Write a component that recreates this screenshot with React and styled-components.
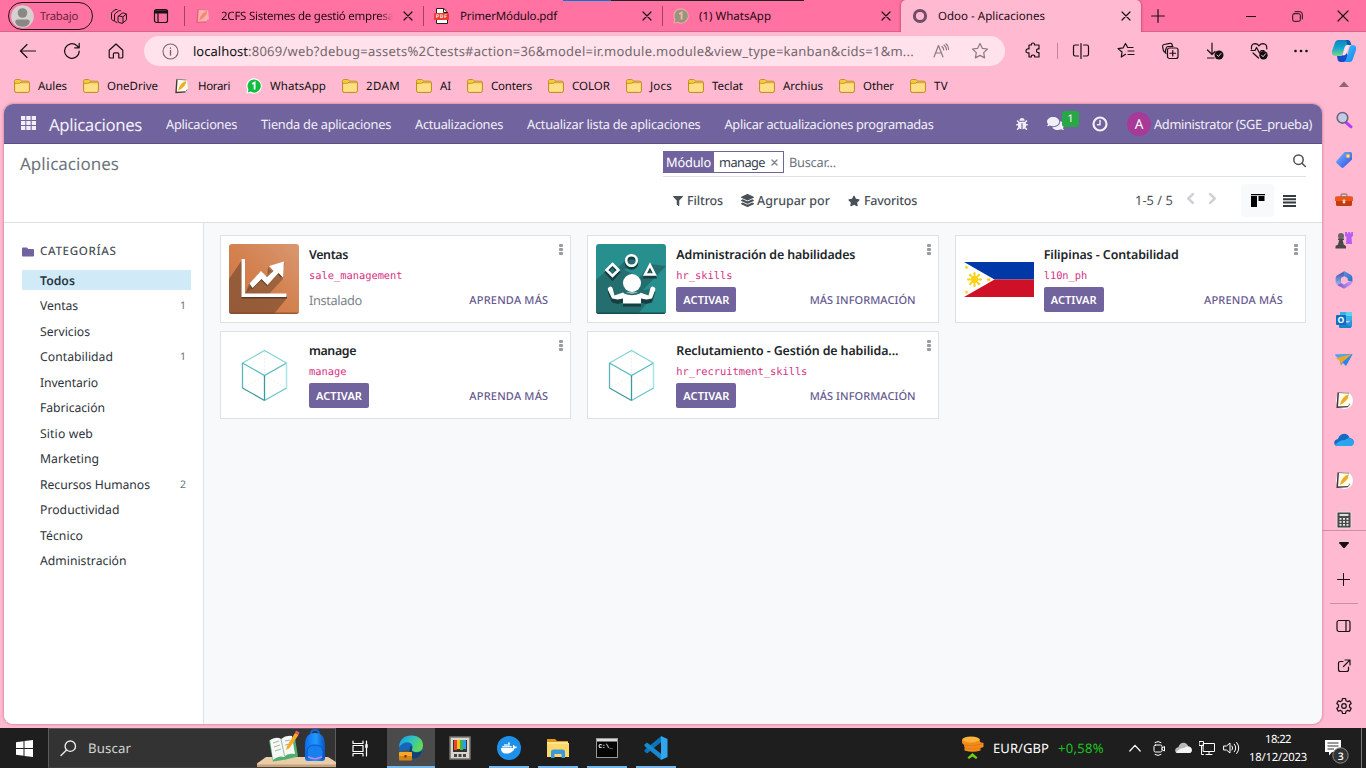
import React, { useLayoutEffect, useRef, useState } from 'react';
import styled, { createGlobalStyle } from 'styled-components';
import { FaBug, FaComments, FaFilter, FaLayerGroup, FaStar, FaFolder, FaDocker } from 'react-icons/fa';

const ui = '"Noto Sans", "Open Sans", sans-serif';

const GlobalStyle = createGlobalStyle`
  *, *::before, *::after { box-sizing: border-box; }
  html, body { margin: 0; padding: 0; overflow: hidden; }
  body { font-family: ${ui}; font-size: 12px; color: #111; text-rendering: geometricPrecision; }
  svg { display: block; flex: none; }
`;

/* A one-line label whose tracking is tuned so that it takes exactly `w` pixels. */
function Fit({ w, className, children }) {
  const ref = useRef(null);
  const [tracking, setTracking] = useState(0);
  useLayoutEffect(() => {
    const natural = ref.current.getBoundingClientRect().width;
    setTracking((w - natural) / String(children).length);
  }, [w, children]);
  return (
    <span className={className}>
      <span ref={ref} style={{ letterSpacing: tracking ? `${tracking}px` : undefined }}>{children}</span>
    </span>
  );
}

const Label = styled(Fit)`
  display: block;
  flex: none;
  width: ${(p) => p.w}px;
  white-space: nowrap;
`;

/* ---------- window frame ---------- */
const Screen = styled.div`
  width: 1366px;
  height: 768px;
  display: flex;
  flex-direction: column;
  background: #ffb9d0;
  overflow: hidden;
  position: relative;
`;
const TopStrip = styled.div`
  position: absolute;
  top: 0;
  left: 563px;
  width: 241px;
  height: 1px;
  background: linear-gradient(90deg, #0078d7 0 48px, #222 48px);
`;
const TabStrip = styled.div`
  height: 32px;
  flex: none;
  display: flex;
  align-items: stretch;
  background: #ff72a1;
  box-shadow: inset 0 -1px 0 #d7648b;
`;
const Profile = styled.div`
  width: 85px;
  height: 28px;
  margin: 2px 0 0 8px;
  border: 1px solid #22111a;
  border-radius: 14px;
  display: flex;
  align-items: center;
  gap: 6px;
  padding-left: 2px;
  color: #6e1f3d;
  font-size: 11.3px;
`;
const StripIcons = styled.div`
  display: flex;
  padding: 0 2px 0 5px;
`;
const StripIcon = styled.div`
  width: 42px;
  display: grid;
  place-items: center;
`;
const Tab = styled.div`
  width: ${(p) => (p.$active ? 240 : 239)}px;
  flex: none;
  display: flex;
  align-items: center;
  gap: 10px;
  padding: 0 10px 0 11px;
  font-size: 11.5px;
  position: relative;
  color: #1d0a12;
  background: ${(p) => (p.$active ? '#ffb9d0' : 'transparent')};
  border-radius: ${(p) => (p.$active ? '5px 5px 0 0' : 0)};
  box-shadow: ${(p) => (p.$active ? '0 0 3px #a8305a' : 'none')};
  clip-path: ${(p) => (p.$active ? 'inset(0 -4px 0 -4px)' : 'none')};
  &::before {
    content: '';
    position: absolute;
    left: 0;
    top: 6px;
    width: 1px;
    height: 20px;
    background: ${(p) => (p.$active ? 'transparent' : '#a24364')};
  }
`;
const TabTitle = styled.div`
  flex: 1;
  min-width: 0;
  ${(p) => p.$fade && 'mask-image: linear-gradient(90deg, #000 92%, transparent);'}
`;
const TabFiller = styled.div`
  flex: 1;
  display: flex;
  align-items: center;
  padding-left: 10px;
`;
const WindowButton = styled.div`
  width: 46px;
  display: grid;
  place-items: center;
`;

const Toolbar = styled.div`
  height: 40px;
  flex: none;
  display: flex;
  align-items: center;
  padding: 0 0 2px 6px;
`;
const ToolButton = styled.div`
  width: ${(p) => p.$w || 44}px;
  flex: none;
  display: grid;
  place-items: center;
  padding-left: ${(p) => p.$shift || 0}px;
`;
const Address = styled.div`
  width: 861px;
  height: 30px;
  flex: none;
  margin-left: 6px;
  border-radius: 15px;
  background: #ffe2eb;
  display: flex;
  align-items: center;
  padding-left: 18px;
  font-size: 13px;
  color: #74676c;
`;
const Host = styled(Label)`color: #111; margin-left: 14px;`;
const ToolRule = styled.div`
  width: 1px;
  height: 16px;
  background: #c4869a;
`;
const Bookmarks = styled.div`
  height: 32px;
  flex: none;
  display: flex;
  align-items: center;
  gap: 16px;
  padding: 0 14px 4px;
  font-size: 11.5px;
`;
const Bookmark = styled.div`
  display: flex;
  align-items: center;
  gap: 8px;
`;
const BookmarkRow = styled.div`
  display: flex;
  justify-content: space-between;
  flex: none;
  height: 32px;
`;
const ScrollUp = styled.div`
  width: 44px;
  display: grid;
  place-items: center;
  padding-bottom: 8px;
`;

const Middle = styled.div`
  display: flex;
  height: 624px;
  flex: none;
`;
const Page = styled.div`
  width: 1318px;
  height: 620px;
  margin-left: 4px;
  border-radius: 9px;
  overflow: hidden;
  background: #f8f9fa;
  box-shadow: 0 0 3px rgba(110, 30, 60, 0.5);
  display: flex;
  flex-direction: column;
`;

/* ---------- application ---------- */
const NavBar = styled.header`
  height: 40px;
  flex: none;
  display: flex;
  align-items: center;
  background: #71639e;
  border-bottom: 1px solid #5a4f7f;
  padding: 0 10px 0 17px;
  color: #f1eff6;
  font-size: 12.8px;
`;
const AppsGrid = styled.div`padding-bottom: 2px;`;
const Brand = styled(Label)`
  font-size: 16.8px;
  margin: 0 24px 0 13px;
  line-height: 38px;
  padding-top: 2px;
`;
const Menu = styled.nav`
  display: flex;
  gap: 24px;
  flex: 1;
  padding-top: 1px;
`;
const ChatIcon = styled.div`
  position: relative;
  margin: 0 28px 0 19px;
`;
const Badge = styled.span`
  position: absolute;
  left: 15px;
  top: -4px;
  width: 17px;
  height: 16px;
  border-radius: 3px;
  background: #28a745;
  color: #fff;
  font-size: 10.5px;
  line-height: 16px;
  text-align: center;
`;
const Avatar = styled.div`
  width: 24px;
  height: 24px;
  border-radius: 50%;
  background: #a73a98;
  color: #fff;
  font-size: 13.5px;
  line-height: 24px;
  text-align: center;
  margin: 0 3px 0 19px;
`;

const ControlPanel = styled.section`
  height: 79px;
  flex: none;
  display: flex;
  justify-content: space-between;
  background: #fff;
  border-bottom: 1px solid #dee2e6;
  padding: 0 16px;
`;
const Crumb = styled(Label)`
  font-size: 17px;
  color: #6c757d;
  line-height: 40px;
`;
const SearchArea = styled.div`width: 643px;`;
const SearchRow = styled.div`
  height: 33px;
  display: flex;
  align-items: center;
  border-bottom: 1px solid #dee2e6;
  font-size: 12.8px;
  padding-top: 4px;
`;
const Facet = styled.div`
  width: 121px;
  height: 22px;
  flex: none;
  border: 1px solid #71639e;
  display: flex;
  align-items: center;
  margin-right: 5px;
  color: #374151;
`;
const FacetName = styled.div`
  background: #71639e;
  color: #fff;
  width: 50px;
  height: 20px;
  line-height: 20px;
  padding-left: 2px;
  margin-right: 5px;
`;
const FacetClose = styled.div`margin-left: 6px;`;
const Placeholder = styled(Label)`color: #6c757d; flex: 1;`;
const SearchIcon = styled.div`padding-bottom: 3px;`;
const OptionsRow = styled.div`
  height: 45px;
  display: flex;
  align-items: center;
  padding: 2px 0 0 10px;
  color: #495057;
`;
const SearchOption = styled.div`
  display: flex;
  align-items: center;
  gap: ${(p) => p.$gap}px;
  margin-right: 18px;
  font-size: 12.5px;
  font-weight: 500;
`;
const Pager = styled.div`
  margin-left: auto;
  display: flex;
  align-items: center;
  gap: 13px;
  font-size: 12.8px;
  color: #495057;
  padding: 0 1px 2px 0;
`;
const PagerArrow = styled.div`padding-bottom: 3px;`;
const ViewButton = styled.div`
  width: 33px;
  height: 33px;
  margin-left: ${(p) => (p.$active ? 23 : -1)}px;
  border-radius: 3px;
  background: ${(p) => (p.$active ? '#f8f9fa' : 'none')};
  display: grid;
  place-items: center;
`;

const Content = styled.div`
  flex: 1;
  display: flex;
`;
const Categories = styled.aside`
  width: 200px;
  flex: none;
  background: #fff;
  border-right: 1px solid #dee2e6;
  padding: 19px 12px 0 18px;
`;
const CategoryHead = styled.div`
  display: flex;
  align-items: center;
  gap: 6px;
  height: 19px;
  margin-bottom: 9px;
  color: #495057;
  font-size: 11.6px;
  font-weight: 500;
`;
const Category = styled.div`
  height: 20px;
  margin-bottom: 5.5px;
  padding: 0 5px 0 18px;
  display: flex;
  align-items: center;
  justify-content: space-between;
  font-size: 12.2px;
  font-weight: ${(p) => (p.$active ? 600 : 400)};
  color: ${(p) => (p.$active ? '#2a3440' : '#2e343b')};
  background: ${(p) => (p.$active ? '#d1eaf8' : 'none')};
`;
const Count = styled.span`
  font-size: 10.5px;
  color: #6c757d;
  padding-top: 1px;
`;
const Kanban = styled.main`
  flex: 1;
  display: grid;
  grid-template-columns: repeat(3, 1fr);
  grid-auto-rows: 88px;
  gap: 8px 16px;
  padding: 12px 16px;
`;
const Card = styled.article`
  background: #fff;
  border: 1px solid #dee2e6;
  display: flex;
  padding: 8px 7px 0 8px;
  min-width: 0;
`;
const CardImage = styled.div`
  width: 70px;
  height: 70px;
  flex: none;
  display: grid;
  place-items: center;
  margin-right: 10px;
`;
const CardBody = styled.div`
  flex: 1;
  min-width: 0;
  display: flex;
  flex-direction: column;
`;
const Title = styled(Label)`
  font-size: 12.4px;
  font-weight: 600;
  line-height: 20px;
  height: 21px;
  padding-top: 1px;
  color: #212529;
`;
const Tech = styled(Label)`
  font-family: "DejaVu Sans Mono", monospace;
  font-size: 10.4px;
  line-height: 20px;
  height: 22px;
  color: #d63384;
  padding-top: 1px;
`;
const CardFoot = styled.div`
  height: 25px;
  display: flex;
  align-items: center;
  justify-content: space-between;
  padding-right: 11px;
`;
const Activate = styled.button`
  width: 60px;
  height: 25px;
  border: 0;
  border-radius: 2px;
  padding: 0 0 0 7px;
  background: #71639e;
  color: #fff;
  font: 600 11px/25px ${ui};
  text-align: left;
`;
const Installed = styled(Label)`
  color: #7c848b;
  font-size: 12.8px;
  padding-top: 1px;
`;
const MoreLink = styled(Label)`
  color: #66598f;
  font-size: 11px;
  font-weight: 500;
  padding-top: 1px;
`;

/* ---------- browser side rail ---------- */
const Rail = styled.aside`
  width: 44px;
  height: 624px;
  display: flex;
  flex-direction: column;
  align-items: center;
`;
const RailApps = styled.div`
  width: 44px;
  height: 427px;
  overflow: hidden;
  border-bottom: 1px solid #c790a3;
`;
const RailItem = styled.div`
  height: ${(p) => p.$h || 40}px;
  width: 44px;
  flex: none;
  display: grid;
  place-items: center;
  padding-right: 1px;
`;
const FirstRailItem = styled(RailItem)`
  height: 36px;
  padding-bottom: 5px;
`;
const RailRule = styled.div`
  width: 28px;
  height: 1px;
  background: #c790a3;
  margin: 3px 0 2px;
`;

/* ---------- desktop task bar ---------- */
const TaskBar = styled.footer`
  height: 40px;
  flex: none;
  display: flex;
  background: #1f1e1e;
  color: #fff;
`;
const TaskCell = styled.div`
  width: ${(p) => p.$w || 48}px;
  flex: none;
  display: grid;
  place-items: center;
`;
const TaskSearch = styled.div`
  width: 288px;
  border: 1px solid #5b5b5b;
  border-bottom-color: #3f3f3f;
  background: #333;
  display: flex;
  align-items: center;
  padding-left: 11px;
  gap: 11px;
  font-size: 13.2px;
  color: #d4d4d4;
`;
const SearchArt = styled.div`margin: 0 -1px 0 auto;`;
const TaskApp = styled.div`
  width: ${(p) => (p.$active ? 48 : 40)}px;
  margin: ${(p) => (p.$active ? '0 5px 0 3px' : '0 9px 0 0')};
  display: grid;
  place-items: center;
  background: ${(p) => (p.$active ? '#4b4b4b' : 'none')};
  box-shadow: ${(p) => (p.$open ? 'inset 0 -2px 0 #76b9ed' : 'none')};
`;
const Tray = styled.div`
  margin-left: auto;
  display: flex;
  align-items: center;
`;
const TrayIcon = styled.div`
  width: 24px;
  display: grid;
  place-items: center;
`;
const Rate = styled(Label)`font-size: 13px; margin: 0 9px;`;
const Change = styled(Label)`font-size: 13px; color: #19c61f; margin-right: 19px;`;
const Clock = styled.div`
  width: 70px;
  display: flex;
  flex-direction: column;
  align-items: center;
  font-size: 11.3px;
  line-height: 18px;
  padding-top: 1px;
`;
const Notice = styled.div`
  width: 49px;
  height: 40px;
  display: flex;
  padding: 11px 0 0 12px;
  border-right: 1px solid #777;
  margin-right: 4px;
`;
const NoticeText = styled.text`
  font: 600 10.5px "Open Sans", sans-serif;
  fill: #fff;
`;

/* ---------- drawings ---------- */
const Line = ({ s = 20, w = s, h = s, vb = `0 0 ${w} ${h}`, sw = 1.2, c = '#1a1015', children }) => (
  <svg width={w} height={h} viewBox={vb} fill="none" stroke={c} strokeWidth={sw} strokeLinecap="round" strokeLinejoin="round">{children}</svg>
);
const Close = ({ s = 10, c, sw }) => <Line s={s} c={c} sw={sw}><path d={`M1 1l${s - 2} ${s - 2}M${s - 1} 1L1 ${s - 1}`} /></Line>;

const Folder = () => (
  <svg width="16" height="16" viewBox="0 0 16 16">
    <path d="M.6 3.2Q.6 1.6 2.2 1.6h3.2q.8 0 1.3.6l1 1h6.1q1.6 0 1.6 1.6v8q0 1.6-1.6 1.6H2.2Q.6 14.4.6 12.8z" fill="#ffdf86" stroke="#b88a18" />
    <path d="M1.1 4.6V3.3q0-1.2 1.2-1.2h3q.6 0 1 .5l.9 1-1.5 1.2q-.4.3-1 .3H1.1z" fill="#f8ca31" />
    <path d="M1 5.2h3.8q.7 0 1.2-.4l1.8-1.4h6.5q1 .2 1 1.8" fill="#d9a93f" />
    <path d="M.6 5.4h4.2q.7 0 1.2-.4L7.7 3.3" fill="none" stroke="#b88a18" strokeWidth=".8" />
  </svg>
);
const Moodle = ({ faded, s = 16, halo }) => (
  <svg width={s} height={s} viewBox="0 0 16 16" opacity={faded ? 0.6 : 1}>
    {halo && <circle cx="8.5" cy="8.5" r="7.5" fill="#fff" />}
    <path d="M3.5 1.5l9.5.5 1 9-2 3-9 .6z" fill={faded ? '#ffd9c4' : '#fffdf0'} />
    <path d="M2.9 1.2L2 14.5l9.5-.6" fill="none" stroke={faded ? '#c9605f' : '#3b3a35'} strokeWidth="1.3" />
    <path d="M3 1.300l9.500.7M11.500 13.900l1.800-2.600" fill="none" stroke={faded ? '#d47873' : '#8c8a80'} />
    <path d="M12.300 2.800Q12 9 4.200 12.500 5.500 5 12.300 2.800z" fill={faded ? '#fb9548' : '#efae25'} />
  </svg>
);
const Whats = ({ faded }) => (
  <svg width="16" height="16" viewBox="0 0 16 16">
    <path d="M8 .3a7.7 7.7 0 1 1-3.700 14.4L.3 15.800l1-4A7.700 7.700 0 0 1 8 .3z" fill={faded ? '#e7a9ac' : '#fff'} />
    <path d="M8.200 1.400a6.600 6.600 0 1 1-3.500 12.200l-3 .8.8-3A6.600 6.600 0 0 1 8.200 1.400z" fill={faded ? '#9a9478' : '#10bd3f'} />
    <path d="M6.200 6L8.600 4.500V11.400" stroke={faded ? '#eab8bc' : '#fff'} strokeWidth="1.800" fill="none" />
  </svg>
);
const PdfText = styled.text`
  font: 700 5px Roboto, sans-serif;
  fill: #fff;
`;
const Pdf = () => (
  <svg width="16" height="16" viewBox="0 0 16 16">
    <path d="M2.500 .5h7.300l3.700 3.700v11.300h-11z" fill="#fff" stroke="#222" />
    <path d="M9.500 .5v4h4" fill="none" stroke="#222" />
    <rect x="0" y="5" width="15" height="7" rx="1" fill="#ee3b2f" />
    <PdfText x="2" y="10.400" textLength="11">PDF</PdfText>
  </svg>
);
const Person = () => (
  <svg width="23" height="23" viewBox="0 0 23 23">
    <circle cx="11.500" cy="11.500" r="11.300" fill="#d4d1ce" />
    <circle cx="11.500" cy="8" r="4.800" fill="#8a8886" />
    <path d="M4.200 17q0-2.500 2.500-2.500h9.600q2.500 0 2.500 2.500-1 4.700-7.300 4.700T4.200 17z" fill="#8a8886" />
  </svg>
);
const Odoo = () => <svg width="16" height="16"><circle cx="8" cy="8" r="5.600" fill="none" stroke="#714b67" strokeWidth="3" /></svg>;
const Copilot = () => (
  <svg width="26" height="24" viewBox="0 0 26 24">
    <defs>
      <linearGradient id="cpA" x1="0" y1="0" x2="0" y2="1"><stop stopColor="#0a83c8" /><stop offset=".5" stopColor="#16a8c8" /><stop offset="1" stopColor="#7cd58b" /></linearGradient>
      <linearGradient id="cpB" x1="0" y1="0" x2="1" y2="1"><stop stopColor="#3fc3ff" /><stop offset="1" stopColor="#1583ec" /></linearGradient>
    </defs>
    <path d="M6 17h3.500q2.200 0 2.800-2l1.200-4 5.500 9-2 3H9.500q-2 0-2.800-2z" fill="#174bc9" />
    <path d="M7 1h9.500q2 0 2.800 2l1 3h-3.800q-2.200 0-2.800 2l-2 7q-.8 2-3 2H5Q0 17 1 12L4 3.500Q5 1 7 1z" fill="url(#cpA)" />
    <path d="M15 1h1.500q2 0 2.800 2l1 3h-3.800z" fill="#0b5aa8" />
    <path d="M19 23h-6.500q2-.5 2.800-3l3.200-11.500Q19.200 6 21 6q5 0 4 5l-3 8.500Q21 23 19 23z" fill="url(#cpB)" />
    <path d="M11.500 16l2.500-8q.7-2 2.700-2h1.800l-3.300 8.500q-.8 2-2.700 2z" fill="#ffe2eb" />
  </svg>
);
const Dots3 = () => (
  <svg width="4" height="12" viewBox="0 0 4 12" fill="#979ca1"><rect y="0" width="4" height="3" rx="1" /><rect y="4" width="4" height="3" rx="1" /><rect y="8" width="4" height="3" rx="1" /></svg>
);

const SalesArt = () => (
  <svg width="70" height="70" viewBox="0 0 70 70">
    <defs>
      <linearGradient id="sale" x1="0" y1="1" x2="1" y2="0"><stop stopColor="#cd7645" /><stop offset=".5" stopColor="#d3814f" /><stop offset="1" stopColor="#d99871" /></linearGradient>
      <clipPath id="saleClip"><rect width="70" height="70" rx="3" /></clipPath>
    </defs>
    <g clipPath="url(#saleClip)">
      <rect width="70" height="70" fill="url(#sale)" />
      <path d="M13 16L0 35V70H45L58 54H16V50L28 40 38 34 39 23H47L39 23l4 4-8 7-4-5-11 14-4 8z" fill="#73492f" opacity=".62" />
      <path d="M16 50h24L54 35V19L39.500 22l4 5-7 6-5-5L20 40z" fill="#73492f" opacity=".55" />
      <path d="M0 68.500h70V70H0z" fill="#7e4727" opacity=".7" />
      <path d="M12.500 17h3.500v34.500h42v3H12.500z" fill="#5d3a26" />
      <path d="M21 41l11-12 6 6 9-8-5-4 13.500-4L52 34l-3-4-11 12-6-6-9 9.500z" fill="#5d3a26" />
      <path d="M12.500 15h3.500v34.500h41.500V53H12.500z" fill="#fff" />
      <path d="M20.500 39.500L32 27l6 6 6.500-6-4.500-5 15-4.500-1 16-4.500-4.500L38.500 41l-6-6-9 9z" fill="#fff" />
    </g>
  </svg>
);
const SkillsArt = () => (
  <svg width="70" height="70" viewBox="0 0 70 70">
    <defs><clipPath id="skClip"><rect width="70" height="70" rx="3" /></clipPath></defs>
    <g clipPath="url(#skClip)">
      <rect width="70" height="70" fill="#27908f" />
      <path d="M10 27L0 36V70H42L60 48 55 45 47 46 70 22 54 20 44 33 28 26 40 20 34 11 22 24z" fill="#255f63" opacity=".7" />
      <path d="M0 68.500h70V70H0z" fill="#174c50" />
      <g fill="none" stroke="#163f43" strokeWidth="3" transform="translate(0 2)"><circle cx="35.500" cy="17" r="5.300" /><path d="M16.500 20l6 6.500-6 6.500-6-6.500zM54 20.500l4.800 10.500H49z" /></g>
      <g fill="none" stroke="#fff" strokeWidth="2.500"><circle cx="35.500" cy="16.500" r="5.300" /><path d="M16.500 20l6 6-6 6-6-6zM54 21l4.800 9.500H49z" /></g>
      <path transform="translate(0 2.500)" fill="#163f43" d="M12.500 43.500q3-1.500 4 1l2 7 8-2h17.500l8 2 2-7q1-2.500 4-1 1.500 1 1 3L56 56l-6 1.500-5-1.500v4H27v-4l-5 1.500-6-1.500-4-9.500q-.5-2 .5-3z" />
      <path d="M13 43q2.500-1.500 3.500 1l2 7.500 8.500-3h17l8.500 3 2-7.500q1-2.500 3.500-1 2 1 1.200 3L56 54.500l-5.500 1-5.500-1V59.500H27v-5l-5.500 1-5.500-1L12 46q-.8-2 1-3z" fill="#fff" />
      <path d="M26 46q10 7 20 0l-2 3.500q-8 3.500-16 0z" fill="#27696c" />
      <circle cx="36" cy="39" r="9" fill="#fff" />
    </g>
  </svg>
);
const CubeArt = () => (
  <svg width="70" height="70" viewBox="0 0 70 70" fill="none">
    <path d="M35.500 11v25L13.500 48M35.500 36l22 12" stroke="#e2eeee" strokeWidth=".8" strokeDasharray="2 1.500" />
    <path d="M13.500 23l22-12.500 22 12.500" stroke="#84d4d6" strokeWidth="1.200" />
    <path d="M13.500 23v25" stroke="#5eb5b8" strokeWidth="1.300" />
    <path d="M13.500 48l22 12.500" stroke="#3a989b" strokeWidth="1.200" />
    <path d="M35.500 60.500l22-12.500" stroke="#69c3c5" strokeWidth="1.200" />
    <path d="M13.500 23l22 12.500L57.500 23" stroke="#58b9bc" strokeWidth="1.200" />
    <path d="M35.500 35.500v25" stroke="#3a9a9d" strokeWidth="1.300" />
    <path d="M57.500 23v25" stroke="#a5e6e6" strokeWidth="1.500" />
  </svg>
);
const rays = [0, 45, 90, 135, 180, 225, 270, 315];
const FlagArt = () => (
  <svg width="70" height="35" viewBox="0 0 70 35">
    <path d="M0 0h70v17.500H0z" fill="#0038a8" /><path d="M0 17.500h70V35H0z" fill="#ce1126" /><path d="M0 0l30.500 17.500L0 35z" fill="#fff" />
    <g fill="#fcd116"><circle cx="10.500" cy="17.500" r="3.700" />{rays.map((r) => <path key={r} d="M9.700 14l-.4-3.300 1.200-.7 1.200.7-.4 3.300z" transform={`rotate(${r} 10.500 17.500)`} />)}
      <path d="M2.500 3.300l.6 1.300 1.400.1-1 1 .2 1.400-1.200-.6-1.200.6.2-1.400-1-1 1.400-.1zM2.500 28l.6 1.300 1.400.1-1 1 .2 1.400-1.200-.6-1.200.6.2-1.400-1-1 1.400-.1zM23.500 15.500l1.200 1 1.800-.4-.6 1.500.6 1.500-1.800-.4-1.200 1v-1.600l-1.200-.5 1.200-.5z" />
    </g>
  </svg>
);

const Magnifier = () => (
  <svg width="18" height="18" viewBox="0 0 18 18"><path d="M10.500 11l5.500 4.800" stroke="#b63df0" strokeWidth="3" strokeLinecap="round" /><circle cx="7.500" cy="6.800" r="5.300" fill="#c5c9e8" stroke="#696478" strokeWidth="1.600" /></svg>
);
const Tag = () => (
  <svg width="18" height="18" viewBox="0 0 18 18"><defs><linearGradient id="tag" x1="0" y1="0" x2="1" y2="1"><stop stopColor="#74bcff" /><stop offset="1" stopColor="#3048e6" /></linearGradient></defs><path d="M9.500 1h6q1.500 0 1.500 1.500v6L8.500 16.500q-1 .8-2 0L1.500 12q-.8-1 0-2z" fill="url(#tag)" /><circle cx="13" cy="5" r="1.800" fill="#e7e7c5" stroke="#ecb92c" /></svg>
);
const ToolCase = () => (
  <svg width="18" height="16" viewBox="0 0 18 16"><path d="M6 5V3.500Q6 2 7.500 2h3Q12 2 12 3.500V5" fill="none" stroke="#8b8b8b" strokeWidth="1.400" /><rect x="1" y="4.500" width="16" height="9.500" rx="1.500" fill="#c63a0d" /><path d="M0 5.500Q0 4.500 1 4.500h16q1 0 1 1V9H0z" fill="#e9571d" /><rect x="7.700" y="7.500" width="2.600" height="4" rx="1" fill="#e8d7cd" /></svg>
);
const Chess = () => (
  <svg width="18" height="18" viewBox="0 0 18 18"><path d="M10 1h2v1.500h1.200V1h2v1.500h1V1H18v4l-1.500 1 .5 7h-6l.5-7L10 5z" fill="#b85cf5" /><circle cx="6" cy="5" r="3" fill="#666" /><path d="M3 7.500h6v1.400H7.700l1 4.600 2.300 1.500V17.500H.5V15l2.500-1.500 1.200-4.600H3z" fill="#484848" /></svg>
);
const M365 = () => (
  <svg width="18" height="18" viewBox="0 0 18 18">
    <defs>
      <linearGradient id="mA" x1="0" y1="0" x2="0" y2="1"><stop stopColor="#3f4fa8" /><stop offset="1" stopColor="#8fb8f5" /></linearGradient>
      <linearGradient id="mB" x1="0" y1="0" x2="1" y2="1"><stop stopColor="#5a8fe0" /><stop offset="1" stopColor="#2f6fc4" /></linearGradient>
      <linearGradient id="mC" x1="0" y1="0" x2="1" y2="0"><stop stopColor="#7a55c9" /><stop offset="1" stopColor="#c79bf5" /></linearGradient>
    </defs>
    <path d="M9 .5L2.200 4.300Q.6 5.300.6 7.300v4q0 1.700 1.600 2.500L6 12V7l3.500-2L11 1.200z" fill="url(#mA)" />
    <path d="M8.500.8q1-.5 2 0l5.200 3q1.700 1 1.700 3V11l-4.700-1.500V7.300L9 5z" fill="url(#mB)" />
    <path d="M17.400 10.500q0 2.300-1.700 3.300L10 17.200q-1 .5-2 0l-5.800-3.300 3.800-2 3 1.800 5-3.200z" fill="url(#mC)" />
  </svg>
);
const OutlookText = styled.text`font: 700 8.5px "Open Sans", sans-serif; fill: #fff;`;
const Outlook = () => (
  <svg width="18" height="18" viewBox="0 0 18 18"><path d="M5 1h12v9H5z" fill="#36b2e9" /><path d="M11 1h6v4h-6z" fill="#5bd0f5" /><path d="M4 9l12 4v4H5q-1 0-1-1z" fill="#1683cc" /><path d="M17 9v7l-6-3z" fill="#2496df" /><rect x="1" y="4" width="10" height="10" rx="1" fill="#0d6fc2" /><OutlookText x="2.500" y="12">O</OutlookText></svg>
);
const Plane = () => (
  <svg width="18" height="14" viewBox="0 0 18 14"><path d="M0 1.500L17.500 1 11 13 8 10 6 12.500 4.500 7z" fill="#3096ea" /><path d="M0 2l17-1L4.500 7z" fill="#4aa6ef" /><path d="M1 5l16-4-9.500 8L6 12.500 5 8z" fill="#eba62c" /><path d="M17.500 1L8 9.500l3 3z" fill="#2f84e9" /></svg>
);
const Cloud = ({ tray }) => (
  <svg width={tray ? 17 : 20} height={tray ? 12 : 14} viewBox="0 0 20 14"><path d="M4.500 13Q0 13 .2 9.500.5 6.500 4 6 5.500 1 10 .8q4 0 5.500 4.200 4 .5 4.300 4Q19.800 13 15.500 13z" fill={tray ? '#b9b9b9' : '#1769c4'} /><path d="M1 12Q6 6.500 11 7q3-3 7-.5 1.800 1 1.800 3 0 3.500-4.300 3.500h-11Q2 13 1 12z" fill={tray ? '#f3f3f3' : '#28a5ee'} /></svg>
);
const Calc = () => (
  <svg width="16" height="18" viewBox="0 0 16 18"><rect x="1" y="1" width="14" height="16" rx="1.500" fill="#4a4a4a" stroke="#ddd" /><rect x="3.500" y="3" width="9" height="2" fill="#ddd" />{[7, 10, 13].map((y) => [3.500, 7, 10.500].map((x) => <rect key={`${x}-${y}`} x={x} y={y} width="2" height="1.800" fill="#e5e5e5" />))}</svg>
);

const PipArt = () => (
  <svg width="79" height="38" viewBox="0 0 79 38">
    <defs><linearGradient id="bag" x1="0" x2="1"><stop stopColor="#0a6cf0" /><stop offset=".55" stopColor="#2499ff" /><stop offset="1" stopColor="#0754c0" /></linearGradient></defs>
    <path d="M0 34.500L9 28h62l8 5v5H0z" fill="#e9cda8" /><path d="M0 35.500h79V38H0z" fill="#c9a078" />
    <path d="M12 11.500l26-2.500 3 18.500-12 3-13 2z" fill="#4fae70" />
    <path d="M13 11q7-4 11-1 5-4 11-3l3 18q-7-1-11 3-5-2-11 3z" fill="#f5f8f4" /><path d="M24 10l3.500 17M16 14l6-2M17 18l6-2M18 22l6-2M28 12l5-1M28 16l6-1" stroke="#9fb7a8" fill="none" />
    <path d="M38 4l3.500 2-9 13-3.500 2 1-4z" fill="#f7a928" /><path d="M38 4l1-2.500 3.500 2-1 2.500z" fill="#f0596b" />
    <path d="M54 5q0-4 4-4t4 4" fill="none" stroke="#0c64d8" strokeWidth="2" /><path d="M48 16Q48 4 58 4t10 12v13q0 3-3 3H51q-3 0-3-3z" fill="url(#bag)" /><path d="M50 23q0-7 8-7t8 7v6H50z" fill="#1680ef" stroke="#0756c5" /><path d="M51 28q7 3 14 0" stroke="#c684f0" strokeWidth="1.500" fill="none" />
  </svg>
);
const EdgeArt = () => (
  <svg width="26" height="26" viewBox="0 0 26 26">
    <defs><linearGradient id="edg" x1="0" y1="0" x2="1" y2=".4"><stop stopColor="#1798dc" /><stop offset=".5" stopColor="#2cbfc9" /><stop offset="1" stopColor="#62d957" /></linearGradient></defs>
    <circle cx="13" cy="12.500" r="12" fill="#1467b8" /><path d="M1 12Q2 .5 13.500.5 25 1 25 11q-.5 6-7 6-5-.5-4-3 1.500-3-1-5.500Q7 5 1 12z" fill="url(#edg)" /><path d="M14 14q-1 3 4 3.500 4 .3 6.500-2-2 7-9 8.500-6-3-4-9 0-3 1.500-4 2 1 1 3z" fill="#16406e" />
    <rect x="1" y="17" width="13" height="8.500" rx="1" fill="#d98317" /><path d="M1 18q0-1 1-1h11q1 0 1 1v3H1z" fill="#f6a727" /><path d="M5 17v-1.500h5V17" stroke="#7b4812" fill="none" /><rect x="6.500" y="20" width="2" height="2.500" fill="#613b10" />
  </svg>
);
const StoreArt = () => (
  <svg width="22" height="24" viewBox="0 0 22 24"><rect x="1" y="1" width="20" height="22" fill="#d9d5cf" stroke="#77716a" strokeWidth="1.500" /><rect x="4" y="4" width="14" height="12" fill="#333" /><path d="M5 4h3v10H5z" fill="#e8442d" /><path d="M8 4h3v9H8z" fill="#f6c219" /><path d="M11 4h3v10h-3z" fill="#3fb54a" /><path d="M14 4h3v9h-3z" fill="#2f9ce9" /><path d="M5 18h3v3H5zM9.500 18h3v3h-3zM14 18h3v3h-3z" fill="#444" /></svg>
);
const DockerBall = styled.div`
  width: 24px;
  height: 24px;
  border-radius: 50%;
  background: #1d91ea;
  color: #fff;
  display: grid;
  place-items: center;
`;
const ExplorerArt = () => (
  <svg width="22" height="20" viewBox="0 0 22 20"><path d="M0 1h8l2 2h11v16H0z" fill="#dd9a17" /><path d="M0 5h22v14H0z" fill="#ffd867" /><path d="M0 4h21v2H0z" fill="#ffe391" /><path d="M4 20v-6q0-2.500 2.500-2.500h9Q18 11.500 18 14v6h-3.500v-4h-7v4z" fill="#3999dc" /></svg>
);
const PromptText = styled.text`font: 700 6px "Liberation Mono", monospace; fill: #fff;`;
const TerminalArt = () => (
  <svg width="22" height="20" viewBox="0 0 22 20"><rect x=".5" y=".5" width="21" height="19" fill="#050505" stroke="#999" /><path d="M1 1h20v2.500H1z" fill="#dcdcdc" /><PromptText x="2.500" y="10">C:\_</PromptText></svg>
);
const CodeArt = () => (
  <svg width="24" height="24" viewBox="0 0 24 24"><path d="M17 0l6.500 3v18L17 24z" fill="#2ea7ee" /><path d="M17 .2v6L3 17.500l-2.500-2v-1.600z" fill="#0b74bb" /><path d="M17 23.800v-6L3 6.500l-2.500 2V10z" fill="#1789d0" /></svg>
);

/* ---------- data ---------- */
const bookmarks = [
  ['Aules', 29], ['OneDrive', 51], ['Horari', 32, Moodle], ['WhatsApp', 56, Whats], ['2DAM', 34], ['AI', 11], ['Conters', 41],
  ['COLOR', 38], ['Jocs', 22], ['Teclat', 31], ['Archius', 40], ['Other', 31], ['TV', 14],
];
const menu = [['Aplicaciones', 71], ['Tienda de aplicaciones', 130], ['Actualizaciones', 88], ['Actualizar lista de aplicaciones', 173.5], ['Aplicar actualizaciones programadas', 209]];
const categories = [
  ['Todos', 35], ['Ventas', 38, 1], ['Servicios', 50], ['Contabilidad', 73, 1], ['Inventario', 58], ['Fabricación', 65], ['Sitio web', 53],
  ['Marketing', 59], ['Recursos Humanos', 110, 2], ['Productividad', 79.5], ['Técnico', 43], ['Administración', 86.5],
];
const apps = [
  { title: 'Ventas', tw: 39, tech: 'sale_management', art: SalesArt, installed: true, link: 'APRENDA MÁS', lw: 79 },
  { title: 'Administración de habilidades', tw: 179, tech: 'hr_skills', art: SkillsArt, link: 'MÁS INFORMACIÓN', lw: 106 },
  { title: 'Filipinas - Contabilidad', tw: 135, tech: 'l10n_ph', art: FlagArt, link: 'APRENDA MÁS', lw: 79 },
  { title: 'manage', tw: 47, tech: 'manage', art: CubeArt, link: 'APRENDA MÁS', lw: 79 },
  { title: 'Reclutamiento - Gestión de habilida...', tw: 222, tech: 'hr_recruitment_skills', art: CubeArt, link: 'MÁS INFORMACIÓN', lw: 106 },
];

function AppCard({ app }) {
  const Art = app.art;
  return (
    <Card>
      <CardImage><Art /></CardImage>
      <CardBody>
        <Title w={app.tw}>{app.title}</Title>
        <Tech w={app.tech.length * 6.24}>{app.tech}</Tech>
        <CardFoot>
          {app.installed ? <Installed w={53}>Instalado</Installed> : <Activate><Label w={46}>ACTIVAR</Label></Activate>}
          <MoreLink w={app.lw}>{app.link}</MoreLink>
        </CardFoot>
      </CardBody>
      <Dots3 />
    </Card>
  );
}

function BrowserTab({ icon, title, w, active, fade }) {
  return (
    <Tab $active={active}>{icon}<TabTitle $fade={fade}><Label w={w}>{title}</Label></TabTitle><Close /></Tab>
  );
}

export default function App() {
  return (
    <Screen>
      <GlobalStyle />
      <TabStrip>
        <Profile><Person /><Label w={38}>Trabajo</Label></Profile>
        <StripIcons>
          <StripIcon>
            <Line s={18} sw={1}><path d="M4 14l-1.500-.8q-1-.5-1-1.500V6.500q0-1 .7-1.500L5 2.800q.8-.6 2-.3M7 15.500l-1.500-.7q-1-.5-1-1.500V8q0-1 .7-1.500L8.500 4q.8-.6 2-.3" /><path d="M8 10q0-1.300 1.300-1l2.700.6q1 .3 1 1.300v4.600q0 1-1 .8l-3-.8q-1-.3-1-1.300zM8.300 9.300l3.700-3q.7-.5 1.500-.3l2 .5q1 .3 1 1.300v4.500q0 .7-.6 1.200L13 15.800M12.800 10l3.400-2.900" /></Line>
          </StripIcon>
          <StripIcon>
            <Line s={16}><rect x="1.500" y="1.500" width="13" height="13" rx="2" /><path d="M2 3.200h12M2 4.500h12" strokeWidth="2" /><path d="M5 5v9" /></Line>
          </StripIcon>
        </StripIcons>
        <BrowserTab icon={<Moodle faded />} title="2CFS Sistemes de gestió empresa" w={173} fade />
        <BrowserTab icon={<Pdf />} title="PrimerMódulo.pdf" w={97} />
        <BrowserTab icon={<Whats faded />} title="(1) WhatsApp" w={72} />
        <BrowserTab icon={<Odoo />} title="Odoo - Aplicaciones" w={107} active />
        <TabFiller><Line s={14}><path d="M7 .7v12.600M.7 7h12.600" /></Line></TabFiller>
        <WindowButton><Line s={10}><path d="M0 5.500h10" strokeWidth="1" /></Line></WindowButton>
        <WindowButton><Line s={11} sw={1}><rect x=".7" y="2.700" width="7.600" height="7.600" rx="1.500" /><path d="M3 .7h4.800Q10.300.7 10.300 3.200V8" /></Line></WindowButton>
        <WindowButton><Close s={12} /></WindowButton>
      </TabStrip>
      <TopStrip />

      <Toolbar>
        <ToolButton><Line s={18}><path d="M16.500 9H1.500M8 2.500L1.500 9 8 15.500" /></Line></ToolButton>
        <ToolButton><Line s={18}><path d="M16.200 9A7.300 7.300 0 1 1 13.700 3.500L16 5.500M16.200 1.300v4.500h-4.500" /></Line></ToolButton>
        <ToolButton><Line s={18}><path d="M2.200 8.200L9 2l6.800 6.200V15q0 1-1 1h-3v-4q0-1.200-1.300-1.200H7.700q-1.300 0-1.300 1.200v4h-3q-1.200 0-1.200-1z" /></Line></ToolButton>
        <Address>
          <Line s={17} c="#74676c" sw={1.1}><circle cx="8.500" cy="8.500" r="7.500" /><path d="M8.500 7.500v4.500M8.500 5v.2" strokeWidth="1.400" /></Line>
          <Host w={55}>localhost</Host>
          <Label w={666}>:8069/web?debug=assets%2Ctests#action=36&model=ir.module.module&view_type=kanban&cids=1&m...</Label>
          <ToolButton $w={54}><Line s={16} c="#8b7b81"><path d="M1 14L5.500 2.500 10 14M2.600 10h5.900M9 3.500q1.700 1.500 1.700 3.500M11 2q2.500 2 2.500 4.800M13 .8q2.500 2.200 2.500 5.500" /></Line></ToolButton>
          <ToolButton $w={24}><Line s={18} c="#8b7b81"><path d="M9 1.500l2.300 4.800 5.200.7-3.800 3.600.9 5.300L9 13.400l-4.600 2.500.9-5.300L1.500 7l5.200-.7z" /></Line></ToolButton>
        </Address>
        <ToolButton $w={52} $shift={4}><Line s={18}><path d="M5 3h2.500q-.3-2 1.500-2t1.500 2H15v4q-2.500-.5-2.500 1.700T15 10.500V15h-4.300q.2-2-1.700-2t-1.700 2H5v-4.200Q2 11.300 2 9t3-2z" /></Line></ToolButton>
        <ToolRule />
        <ToolButton $w={46}><Line s={18}><path d="M9 1.500v15M6.500 3H3.200Q1.500 3 1.500 4.700v7.600Q1.500 14 3.200 14h3.300M11.500 3h3.300q1.700 0 1.700 1.700v7.600q0 1.700-1.700 1.700h-3.300" /></Line></ToolButton>
        <ToolButton><Line s={18}><path d="M8.500 12.300L4.300 15l.7-5L1 6.600l5.200-.8L8.500 1.500l2.200 4H16M11 9h6M11 12.500h6" /></Line></ToolButton>
        <ToolButton><Line s={18}><path d="M4.500 10.500Q2.800 10 2.400 8.300L1.600 4.700Q1.300 3 3 2.500l6-1.200q1.600-.3 2 1l.4 1.700" /><path d="M5 11.500q-1-1-.5-3l.8-2.700q.4-1.300 1.700-1.300h5" /><rect x="6.500" y="6" width="10.500" height="10.500" rx="2" /><path d="M11.750 8.500v5.500M9 11.250h5.500" /></Line></ToolButton>
        <ToolButton $w={46}><Line s={18}><path d="M6 1v11M1.500 8L6 12.500 9 9.500M1.500 16H8" /><circle cx="13" cy="13" r="4.500" fill="#111" stroke="none" /><path d="M11 13l1.500 1.500 2.500-3" stroke="#ffb9d0" strokeWidth="1" /></Line></ToolButton>
        <ToolButton $w={41}><Line s={18}><path d="M1.500 7Q.8 2 5 1.700 7.500 1.700 9 3.800 10.500 1.700 13 1.700q4.200.3 3.800 5.300M3 11l5.500 5M1 8.500h4l1.500-3 3 5.500 1.700-2.500H14" /><circle cx="13.500" cy="13.300" r="4.200" fill="#111" stroke="none" /><path d="M11.700 13.300l1.300 1.500 2.500-3" stroke="#ffb9d0" strokeWidth="1" /></Line></ToolButton>
        <ToolButton $w={43}><svg width="16" height="4" fill="#111"><circle cx="2.500" cy="2" r="1.300" /><circle cx="8" cy="2" r="1.300" /><circle cx="13.500" cy="2" r="1.300" /></svg></ToolButton>
        <ToolButton $w={43}><Copilot /></ToolButton>
      </Toolbar>

      <BookmarkRow>
        <Bookmarks>
          {bookmarks.map(([name, w, Icon = Folder]) => <Bookmark key={name}><Icon /><Label w={w}>{name}</Label></Bookmark>)}
        </Bookmarks>
        <ScrollUp><svg width="10" height="7"><path d="M5 .5L10 6H0z" fill="#8c6672" /></svg></ScrollUp>
      </BookmarkRow>

      <Middle>
        <Page>
          <NavBar>
            <AppsGrid><svg width="15" height="14" fill="#f1eff6">{[0, 5, 10].map((y) => [0, 5.3, 10.7].map((x) => <rect key={`${x}${y}`} x={x} y={y} width="4.300" height="4" />))}</svg></AppsGrid>
            <Brand w={93}>Aplicaciones</Brand>
            <Menu>{menu.map(([name, w]) => <Label key={name} w={w}>{name}</Label>)}</Menu>
            <FaBug size={12} />
            <ChatIcon><FaComments size={17} /><Badge>1</Badge></ChatIcon>
            <Line s={16} sw={2.2} c="#f1eff6"><circle cx="8" cy="8" r="6.500" /><path d="M8 4.500V8.700H5.500" strokeWidth="1.500" /></Line>
            <Avatar>A</Avatar>
            <Label w={158}>Administrator (SGE_prueba)</Label>
          </NavBar>

          <ControlPanel>
            <Crumb w={99}>Aplicaciones</Crumb>
            <SearchArea>
              <SearchRow>
                <Facet>
                  <FacetName><Label w={45}>Módulo</Label></FacetName>
                  <Label w={46}>manage</Label>
                  <FacetClose><Close s={7} c="#7d858c" sw={1.4} /></FacetClose>
                </Facet>
                <Placeholder w={47}>Buscar...</Placeholder>
                <SearchIcon><Line s={14} c="#495057" sw={1.5}><circle cx="6.500" cy="5.700" r="4.700" /><path d="M10 9.200l3.300 3.300" /></Line></SearchIcon>
              </SearchRow>
              <OptionsRow>
                <SearchOption $gap={4}><FaFilter size={10} /><Label w={36}>Filtros</Label></SearchOption>
                <SearchOption $gap={3}><FaLayerGroup size={13} /><Label w={73}>Agrupar por</Label></SearchOption>
                <SearchOption $gap={4}><FaStar size={12} /><Label w={53}>Favoritos</Label></SearchOption>
                <Pager>
                  <Label w={38}>1-5 / 5</Label>
                  <PagerArrow><Line w={9} h={13} c="#ced2d6" sw={2.4}><path d="M7 2L2.200 6.500 7 11" /></Line></PagerArrow>
                  <PagerArrow><Line w={9} h={13} c="#ced2d6" sw={2.4}><path d="M2 2l4.800 4.500L2 11" /></Line></PagerArrow>
                </Pager>
                <ViewButton $active><svg width="14" height="14"><path d="M0 0h14v1.200H0zM0 2h6v11H0zM7.500 2H13.500v5H7.500z" fill="#000" /></svg></ViewButton>
                <ViewButton><svg width="13" height="12"><path d="M0 0h13v2H0zM0 3.300h13v2H0zM0 6.600h13v2H0zM0 9.900h13v2H0z" fill="#343a40" /></svg></ViewButton>
              </OptionsRow>
            </SearchArea>
          </ControlPanel>

          <Content>
            <Categories>
              <CategoryHead><FaFolder size={12} color="#71639e" /><Label w={76.5}>CATEGORÍAS</Label></CategoryHead>
              {categories.map(([name, w, n], i) => (
                <Category key={name} $active={i === 0}><Label w={w}>{name}</Label>{n && <Count>{n}</Count>}</Category>
              ))}
            </Categories>
            <Kanban>{apps.map((a) => <AppCard key={a.title} app={a} />)}</Kanban>
          </Content>
        </Page>

        <Rail>
          <RailApps>
            <FirstRailItem><Magnifier /></FirstRailItem>
            <RailItem><Tag /></RailItem>
            <RailItem><ToolCase /></RailItem>
            <RailItem><Chess /></RailItem>
            <RailItem><M365 /></RailItem>
            <RailItem><Outlook /></RailItem>
            <RailItem><Plane /></RailItem>
            <RailItem><Moodle s={18} halo /></RailItem>
            <RailItem><Cloud /></RailItem>
            <RailItem><Moodle s={18} halo /></RailItem>
            <RailItem><Calc /></RailItem>
          </RailApps>
          <RailItem $h={28}><svg width="12" height="8"><path d="M2 1h8q1.500 0 .7 1.300L7 6.500q-1 1-2 0L1.300 2.300Q.5 1 2 1z" fill="#111" /></svg></RailItem>
          <RailItem $h={41}><Line s={13} sw={1}><path d="M6.500.5v12M.5 6.500h12" /></Line></RailItem>
          <RailRule />
          <RailItem><Line s={15}><rect x="1" y="1.500" width="13" height="11" rx="2" /><path d="M10 2v10.500" /></Line></RailItem>
          <RailItem><Line s={14}><path d="M6 2.500H3.500Q1.500 2.500 1.500 4.500v6q0 2 2 2h6q2 0 2-2V8M8 1h5v5M12.800 1.200L6.500 7.500" /></Line></RailItem>
          <RailItem>
            <Line s={18}><path d="M7.500 1.500h3l.5 2.200 1.500.9 2.200-.7 1.500 2.600L14.500 8v2l1.700 1.500-1.500 2.600-2.200-.7-1.500.9-.5 2.200h-3L7 14.300l-1.500-.9-2.200.7-1.500-2.600L3.500 10V8L1.800 6.500l1.500-2.600 2.200.7L7 3.700z" /><circle cx="9" cy="9" r="2.300" /></Line>
          </RailItem>
        </Rail>
      </Middle>

      <TaskBar>
        <TaskCell><svg width="17" height="17" fill="#fff"><path d="M0 2.300L7.500 1.300V8H0zM8.500 1.100L17 0v8H8.500zM0 9h7.500v6.700L0 14.700zM8.500 9H17v8l-8.500-1.100z" /></svg></TaskCell>
        <TaskSearch>
          <Line s={17} c="#e8e8e8" sw={1.4}><circle cx="10.300" cy="6.200" r="5.200" /><path d="M6.600 9.900L1 15.500" /></Line>
          <Label w={43}>Buscar</Label>
          <SearchArt><PipArt /></SearchArt>
        </TaskSearch>
        <TaskCell><Line s={17} c="#fff"><path d="M1 1v2.500h10V1M1 16v-2.500h10V16M1 5.500h10v6H1zM14.500 1v3M14.500 8v8" /><path d="M14.500 5v2" strokeWidth="2.500" /></Line></TaskCell>
        <TaskApp $active $open><EdgeArt /></TaskApp>
        <TaskApp><StoreArt /></TaskApp>
        <TaskApp $open><DockerBall><FaDocker size={16} /></DockerBall></TaskApp>
        <TaskApp $open><ExplorerArt /></TaskApp>
        <TaskApp $open><TerminalArt /></TaskApp>
        <TaskApp $open><CodeArt /></TaskApp>
        <Tray>
          <svg width="23" height="24" viewBox="0 0 23 24"><ellipse cx="10" cy="4" rx="9" ry="3.500" fill="#ffb33b" /><path d="M1 4q9 5 18 0v2l3.500 1v4l-3 1v2.500q-8 2.500-16 0v-3l-.5-2.500-2-2z" fill="#f28b1d" /><path d="M3 9q8 2 18-1M4 12q8 2 15 0" stroke="#e0790f" fill="none" /><path d="M11.500 17l5 4.500-1.500 1.500-3.500-2.500L8 23l-1.500-1.500z" fill="#6bd313" /></svg>
          <Rate w={56}>EUR/GBP</Rate>
          <Change w={46}>+0,58%</Change>
          <TrayIcon><Line w={12} h={8} c="#fff"><path d="M.8 7L6 1.300 11.200 7" /></Line></TrayIcon>
          <TrayIcon><Line w={14} h={17} c="#fff" sw={1}><rect x="2" y="5" width="8" height="7" rx="1.500" /><path d="M10 8l2.500-1.500v4.500L10 9.500M3 2.500q3-2 6 0M3 14.500q3 2 6 0" /></Line></TrayIcon>
          <TrayIcon><Cloud tray /></TrayIcon>
          <TrayIcon><Line s={16} c="#fff" sw={1}><path d="M4.500 3.500h11v8h-11zM10 11.500v3M7 14.500h6M.5 1.500h4v4h-4zM2.500 5.500v9h2" /></Line></TrayIcon>
          <TrayIcon><Line w={17} h={14} c="#fff" sw={1}><path d="M1 5h2.500L7 2v10L3.500 9H1zM9 5q1.500 2 0 4M11.300 3.200q3 3.800 0 7.600M13.700 1.500q4.300 5.500 0 11" /></Line></TrayIcon>
          <Clock><Label w={26}>18:22</Label><Label w={58}>18/12/2023</Label></Clock>
          <Notice>
            <svg width="26" height="26" viewBox="0 0 26 26"><path d="M0 1h16v12H7l-3 3.500V13H0z" fill="#fff" /><path d="M2.500 4h11M2.500 7h11M2.500 10H9" stroke="#333" /><circle cx="15.500" cy="16.500" r="7.700" fill="#333" stroke="#8a8a8a" /><NoticeText x="12.700" y="20.500">3</NoticeText></svg>
          </Notice>
        </Tray>
      </TaskBar>
    </Screen>
  );
}
